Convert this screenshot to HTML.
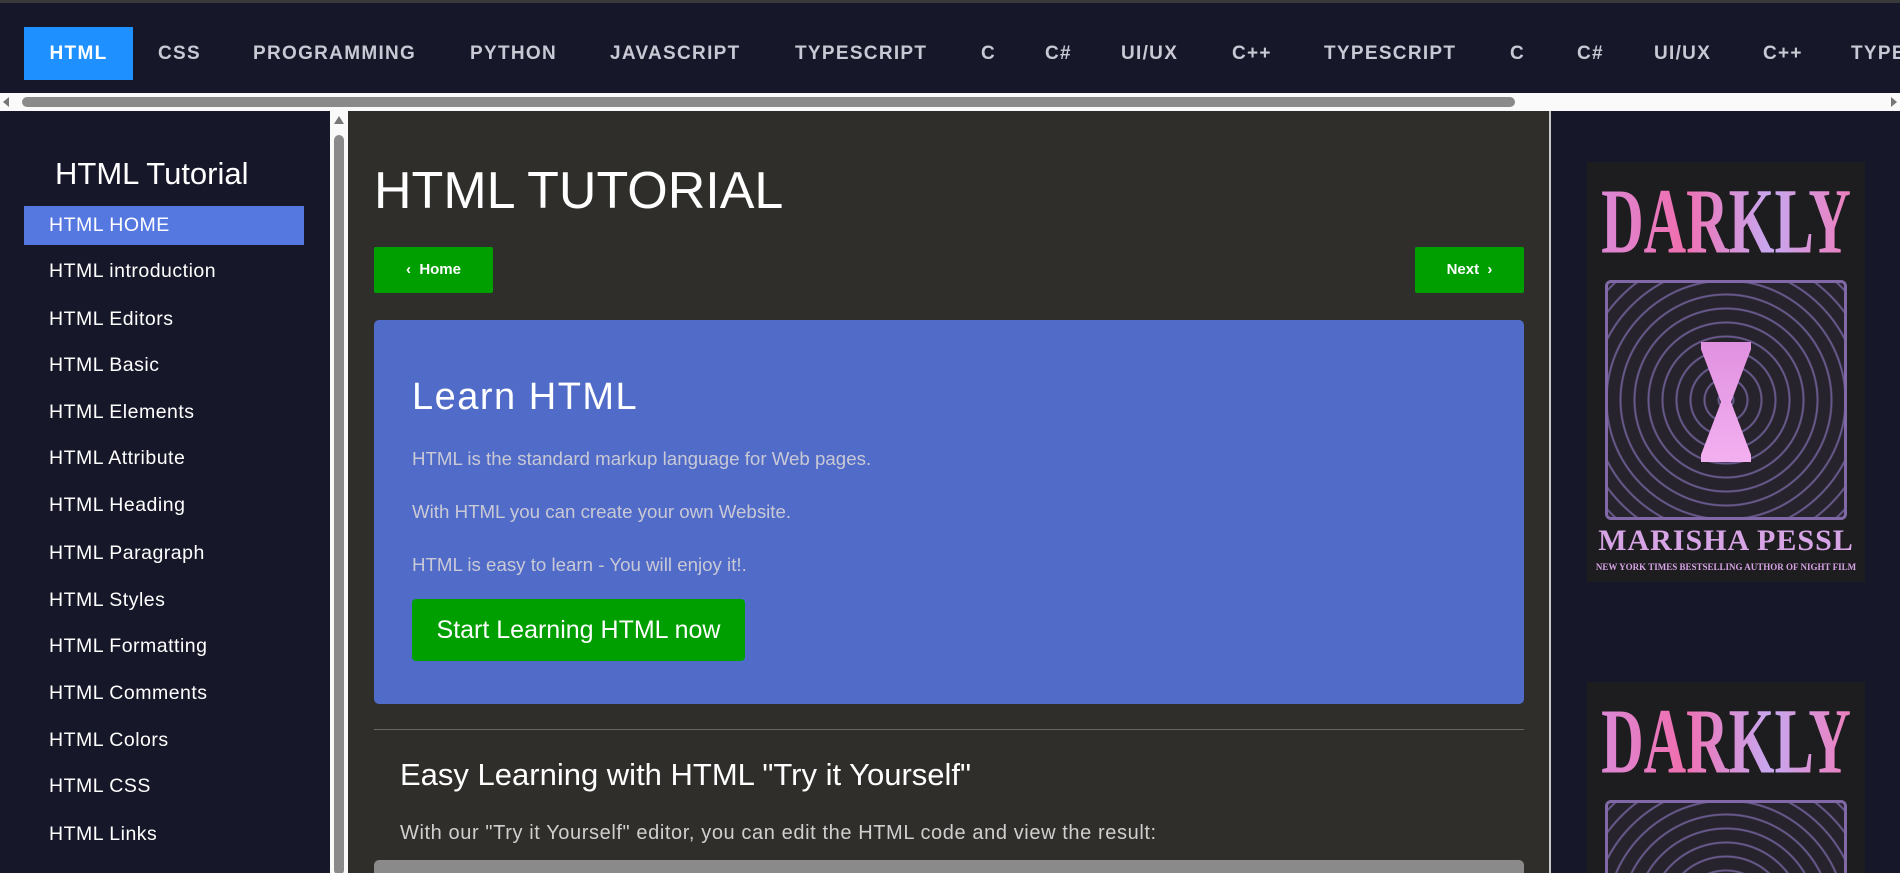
<!DOCTYPE html>
<html><head><meta charset="utf-8"><style>
*{margin:0;padding:0;box-sizing:border-box}
html,body{width:1900px;height:873px;overflow:hidden}
body{background:#161728;font-family:"Liberation Sans",Arial,sans-serif;position:relative}
.top{position:absolute;left:0;top:0;width:1900px;height:93px;background:#161728;border-top:3px solid #3a3a3a}
.nav{position:absolute;top:24px;height:53px;line-height:53px;color:#c8c9d4;font-weight:bold;font-size:19px;letter-spacing:1.3px;white-space:nowrap}
.nav.a{background:#1e90ff;color:#fff;width:109px;text-align:center;left:24px}
.hs{position:absolute;top:93px;left:0;width:1900px;height:18px;background:#fafafa}
.hs .t{position:absolute;left:22px;top:4px;width:1493px;height:10px;background:#8a8a8a;border-radius:5px}
.side{position:absolute;left:0;top:111px;width:330px;height:762px;background:#161728;overflow:hidden}
.side h2{position:absolute;left:55px;top:45px;font-size:31px;font-weight:normal;color:#fff}
.it{position:absolute;left:24px;width:280px;height:39px;line-height:39px;padding-left:25px;color:#fff;font-size:19.5px;letter-spacing:.5px}
.it.a{background:#5577e0}
.vs{position:absolute;left:330px;top:111px;width:18px;height:762px;background:#fafafa;overflow:hidden}
.vs .t{position:absolute;left:4px;top:24px;width:10px;height:740px;background:#8a8a8a;border-radius:5px}
.main{position:absolute;left:348px;top:111px;width:1203px;height:762px;background:#2f2e2a;border-right:2px solid #c8c8c8;overflow:hidden}
.right{position:absolute;left:1551px;top:111px;width:349px;height:762px;background:#161728;overflow:hidden}
.btn{position:absolute;background:#009f00;color:#fff;font-weight:bold;font-size:15px;border-radius:2px;text-align:center;line-height:46px}
.book{position:absolute;left:36px;width:278px;background:#1d1c1e;overflow:hidden}
.book .d{position:absolute;left:0;top:8px;width:278px;text-align:center;font-family:"Liberation Serif",serif;font-size:62px;background:linear-gradient(90deg,#d98ad8,#f06fb0,#c7a8f0,#f07ab8);-webkit-background-clip:text;color:transparent;transform:scale(0.95,1.5);transform-origin:50% 0;font-weight:bold;white-space:nowrap}
.orn{position:absolute;left:18px;top:118px;width:242px;height:240px;border:3px solid #9a7cc8;border-radius:6px;background:repeating-radial-gradient(circle at 50% 50%,#2a2530 0 6px,#7b6aa8 7px 8px,#2a2530 9px 14px);opacity:.8}
.hg{position:absolute;left:114px;top:180px;width:50px;height:120px;background:linear-gradient(#e090e0,#f3b0f0);clip-path:polygon(0 0,100% 0,100% 6%,60% 50%,100% 94%,100% 100%,0 100%,0 94%,40% 50%,0 6%)}
.au{position:absolute;left:0;width:100%;text-align:center;font-family:"Liberation Serif",serif;color:#d7a4e6;font-weight:bold;white-space:nowrap}
</style></head><body>
<div class="top">
<div class="nav a">HTML</div>
<div class="nav" style="left:158px">CSS</div>
<div class="nav" style="left:253px">PROGRAMMING</div>
<div class="nav" style="left:470px">PYTHON</div>
<div class="nav" style="left:610px">JAVASCRIPT</div>
<div class="nav" style="left:795px">TYPESCRIPT</div>
<div class="nav" style="left:981px">C</div>
<div class="nav" style="left:1045px">C#</div>
<div class="nav" style="left:1121px">UI/UX</div>
<div class="nav" style="left:1232px">C++</div>
<div class="nav" style="left:1324px">TYPESCRIPT</div>
<div class="nav" style="left:1510px">C</div>
<div class="nav" style="left:1577px">C#</div>
<div class="nav" style="left:1654px">UI/UX</div>
<div class="nav" style="left:1763px">C++</div>
<div class="nav" style="left:1851px">TYPESCRIPT</div>
</div>
<div class="hs"><div class="t"></div>
<div style="position:absolute;left:3px;top:4px;border-right:6px solid #777;border-top:5px solid transparent;border-bottom:5px solid transparent"></div>
<div style="position:absolute;right:3px;top:4px;border-left:6px solid #777;border-top:5px solid transparent;border-bottom:5px solid transparent"></div></div>
<div class="side">
<h2>HTML Tutorial</h2>
<div class="it a" style="top:95px">HTML HOME</div>
<div class="it" style="top:141px">HTML introduction</div>
<div class="it" style="top:189px">HTML Editors</div>
<div class="it" style="top:235px">HTML Basic</div>
<div class="it" style="top:282px">HTML Elements</div>
<div class="it" style="top:328px">HTML Attribute</div>
<div class="it" style="top:375px">HTML Heading</div>
<div class="it" style="top:423px">HTML Paragraph</div>
<div class="it" style="top:470px">HTML Styles</div>
<div class="it" style="top:516px">HTML Formatting</div>
<div class="it" style="top:563px">HTML Comments</div>
<div class="it" style="top:610px">HTML Colors</div>
<div class="it" style="top:656px">HTML CSS</div>
<div class="it" style="top:704px">HTML Links</div>
</div>
<div class="vs"><div class="t"></div><div style="position:absolute;left:4px;top:5px;border-bottom:8px solid #777;border-left:5px solid transparent;border-right:5px solid transparent"></div></div>
<div class="main">
<div style="position:absolute;left:26px;top:50px;font-size:52px;color:#fff">HTML TUTORIAL</div>
<div class="btn" style="left:26px;top:136px;width:119px">&#x2039;&nbsp; Home</div>
<div class="btn" style="left:1067px;top:136px;width:109px">Next &nbsp;&#x203A;</div>
<div style="position:absolute;left:26px;top:209px;width:1150px;height:384px;background:#506bc8;border-radius:5px">
<div style="position:absolute;left:38px;top:56px;font-size:38px;color:#fff;letter-spacing:1.5px">Learn HTML</div>
<div style="position:absolute;left:38px;top:112px;font-size:18.7px;color:#c9c9d6;line-height:53px">HTML is the standard markup language for Web pages.<br>With HTML you can create your own Website.<br>HTML is easy to learn - You will enjoy it!.</div>
<div style="position:absolute;left:38px;top:279px;width:333px;height:62px;background:#009f00;border-radius:4px;color:#fff;font-size:25px;text-align:center;line-height:62px">Start Learning HTML now</div>
</div>
<div style="position:absolute;left:26px;top:618px;width:1150px;height:1px;background:#666"></div>
<div style="position:absolute;left:52px;top:646px;font-size:31px;color:#fff">Easy Learning with HTML "Try it Yourself"</div>
<div style="position:absolute;left:52px;top:711px;font-size:20px;color:#cfcfcf;letter-spacing:.6px">With our "Try it Yourself" editor, you can edit the HTML code and view the result:</div>
<div style="position:absolute;left:26px;top:749px;width:1150px;height:20px;background:#8a8a8a;border-radius:5px"></div>
</div>
<div class="right">
<div class="book" style="top:51px;height:420px">
<div class="d">DARKLY</div>
<div class="orn"></div><div class="hg"></div>
<div class="au" style="top:362px;font-size:30px;letter-spacing:1px">MARISHA PESSL</div>
<div class="au" style="top:400px;font-size:9px">NEW YORK TIMES BESTSELLING AUTHOR OF NIGHT FILM</div>
</div>
<div class="book" style="top:571px;height:191px">
<div class="d">DARKLY</div>
<div class="orn"></div>
</div>
</div>
</body></html>
